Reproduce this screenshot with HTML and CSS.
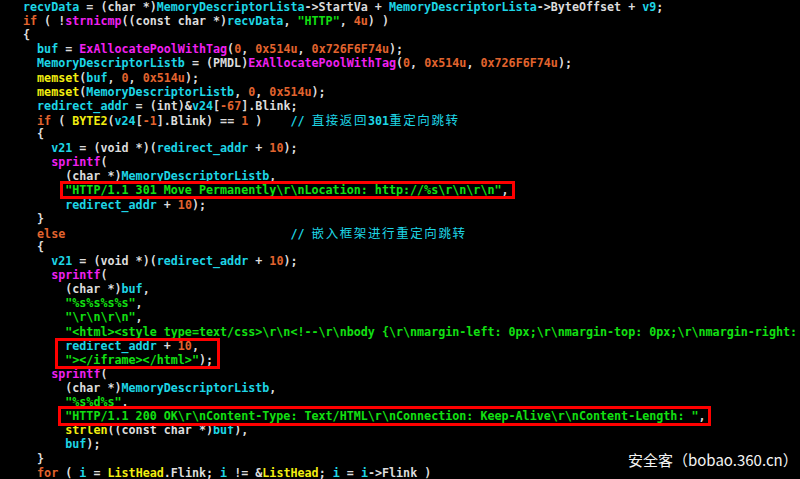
FILE: index.html
```html
<!DOCTYPE html>
<html lang="zh-CN">
<head>
<meta charset="utf-8">
<title>IDA pseudocode</title>
<link rel="stylesheet" href="styles.css">
</head>
<body>
<main class="screen">
  <div class="code">
<div class="ln"><span class="v">recvData</span> = (char *)<span class="v">MemoryDescriptorLista</span>-&gt;StartVa + <span class="v">MemoryDescriptorLista</span>-&gt;ByteOffset + <span class="v">v9</span>;</div>
<div class="ln"><span class="k">if</span> ( !<span class="f">strnicmp</span>((const char *)<span class="v">recvData</span>, <span class="s">"HTTP"</span>, <span class="n">4u</span>) )</div>
<div class="ln">{</div>
<div class="ln">  <span class="v">buf</span> = <span class="f">ExAllocatePoolWithTag</span>(<span class="n">0</span>, <span class="n">0x514u</span>, <span class="n">0x726F6F74u</span>);</div>
<div class="ln">  <span class="v">MemoryDescriptorListb</span> = (PMDL)<span class="f">ExAllocatePoolWithTag</span>(<span class="n">0</span>, <span class="n">0x514u</span>, <span class="n">0x726F6F74u</span>);</div>
<div class="ln">  <span class="y">memset</span>(<span class="v">buf</span>, <span class="n">0</span>, <span class="n">0x514u</span>);</div>
<div class="ln">  <span class="y">memset</span>(<span class="v">MemoryDescriptorListb</span>, <span class="n">0</span>, <span class="n">0x514u</span>);</div>
<div class="ln">  <span class="v">redirect_addr</span> = (int)&amp;<span class="v">v24</span>[<span class="n">-67</span>].Blink;</div>
<div class="ln">  <span class="k">if</span> ( <span class="y">BYTE2</span>(<span class="v">v24</span>[<span class="n">-1</span>].Blink) == <span class="n">1</span> )    <span class="c">// <span class="cjk">直接返回</span>301<span class="cjk">重定向跳转</span></span></div>
<div class="ln">  {</div>
<div class="ln">    <span class="v">v21</span> = (void *)(<span class="v">redirect_addr</span> + <span class="n">10</span>);</div>
<div class="ln">    <span class="f">sprintf</span>(</div>
<div class="ln">      (char *)<span class="v">MemoryDescriptorListb</span>,</div>
<div class="ln">      <span class="box box1"><span class="s">"HTTP/1.1 301 Move Permanently\r\nLocation: http://%s\r\n\r\n"</span>,</span></div>
<div class="ln">      <span class="v">redirect_addr</span> + <span class="n">10</span>);</div>
<div class="ln">  }</div>
<div class="ln">  <span class="k">else</span>                                <span class="c">// <span class="cjk">嵌入框架进行重定向跳转</span></span></div>
<div class="ln">  {</div>
<div class="ln">    <span class="v">v21</span> = (void *)(<span class="v">redirect_addr</span> + <span class="n">10</span>);</div>
<div class="ln">    <span class="f">sprintf</span>(</div>
<div class="ln">      (char *)<span class="v">buf</span>,</div>
<div class="ln">      <span class="s">"%s%s%s%s"</span>,</div>
<div class="ln">      <span class="s">"\r\n\r\n"</span>,</div>
<div class="ln">      <span class="s">"&lt;html&gt;&lt;style type=text/css&gt;\r\n&lt;!--\r\nbody {\r\nmargin-left: 0px;\r\nmargin-top: 0px;\r\nmargin-right:</span></div>
<div class="box box2">
<div class="ln"><span class="v">redirect_addr</span> + <span class="n">10</span>,</div>
<div class="ln"><span class="s">"&gt;&lt;/iframe&gt;&lt;/html&gt;"</span>);</div>
</div>
<div class="ln">    <span class="f">sprintf</span>(</div>
<div class="ln">      (char *)<span class="v">MemoryDescriptorListb</span>,</div>
<div class="ln">      <span class="s">"%s%d%s"</span>,</div>
<div class="ln">      <span class="box box3"><span class="s">"HTTP/1.1 200 OK\r\nContent-Type: Text/HTML\r\nConnection: Keep-Alive\r\nContent-Length: "</span>,</span></div>
<div class="ln">      <span class="y">strlen</span>((const char *)<span class="v">buf</span>),</div>
<div class="ln">      <span class="v">buf</span>);</div>
<div class="ln">  }</div>
<div class="ln">  <span class="k">for</span> ( <span class="v">i</span> = <span class="y">ListHead</span>.Flink; <span class="v">i</span> != &amp;<span class="y">ListHead</span>; <span class="v">i</span> = <span class="v">i</span>-&gt;Flink )</div>
  </div>
  <div class="watermark">安全客（bobao.360.cn）</div>
</main>
</body>
</html>
```

FILE: styles.css
```css
html, body {
  margin: 0;
  padding: 0;
  background: #000;
}

.screen {
  position: relative;
  width: 800px;
  height: 479px;
  overflow: hidden;
  background: #000;
}

.code {
  padding: 0 0 0 23px;
  font-family: "DejaVu Sans Mono", "Liberation Mono", monospace;
  font-weight: bold;
  font-size: 11.7px;
  line-height: 14.12px;
  color: #dcdcdc;
}

.ln {
  white-space: pre;
  height: 14.12px;
}

.v, .c { color: #1ed6e6; }
.k, .n { color: #e2642e; }
.f { color: #f020f0; }
.y { color: #f2ee10; }
.s { color: #12e012; }

.cjk {
  font-family: "Noto Sans CJK SC", sans-serif;
  font-weight: normal;
  font-size: 12.5px;
  letter-spacing: 1.6px;
}

.box {
  position: relative;
}

.box::after {
  content: "";
  position: absolute;
  border: 3px solid #ff0000;
  pointer-events: none;
}

.box1::after {
  top: -2px;
  bottom: -2px;
  left: -5px;
  right: -6px;
}

.box3::after {
  top: -3px;
  bottom: -3px;
  left: -7px;
  right: -5px;
}

.box2 {
  display: block;
  width: fit-content;
  margin-left: 6ch;
}

.box2::after {
  top: -1px;
  bottom: -2px;
  left: -10px;
  right: -7px;
}

.watermark {
  position: absolute;
  left: 628px;
  top: 449px;
  font-family: "Noto Sans CJK SC", "Noto Sans", sans-serif;
  font-size: 15px;
  line-height: 22px;
  color: #f4f4f4;
  white-space: nowrap;
}
```
